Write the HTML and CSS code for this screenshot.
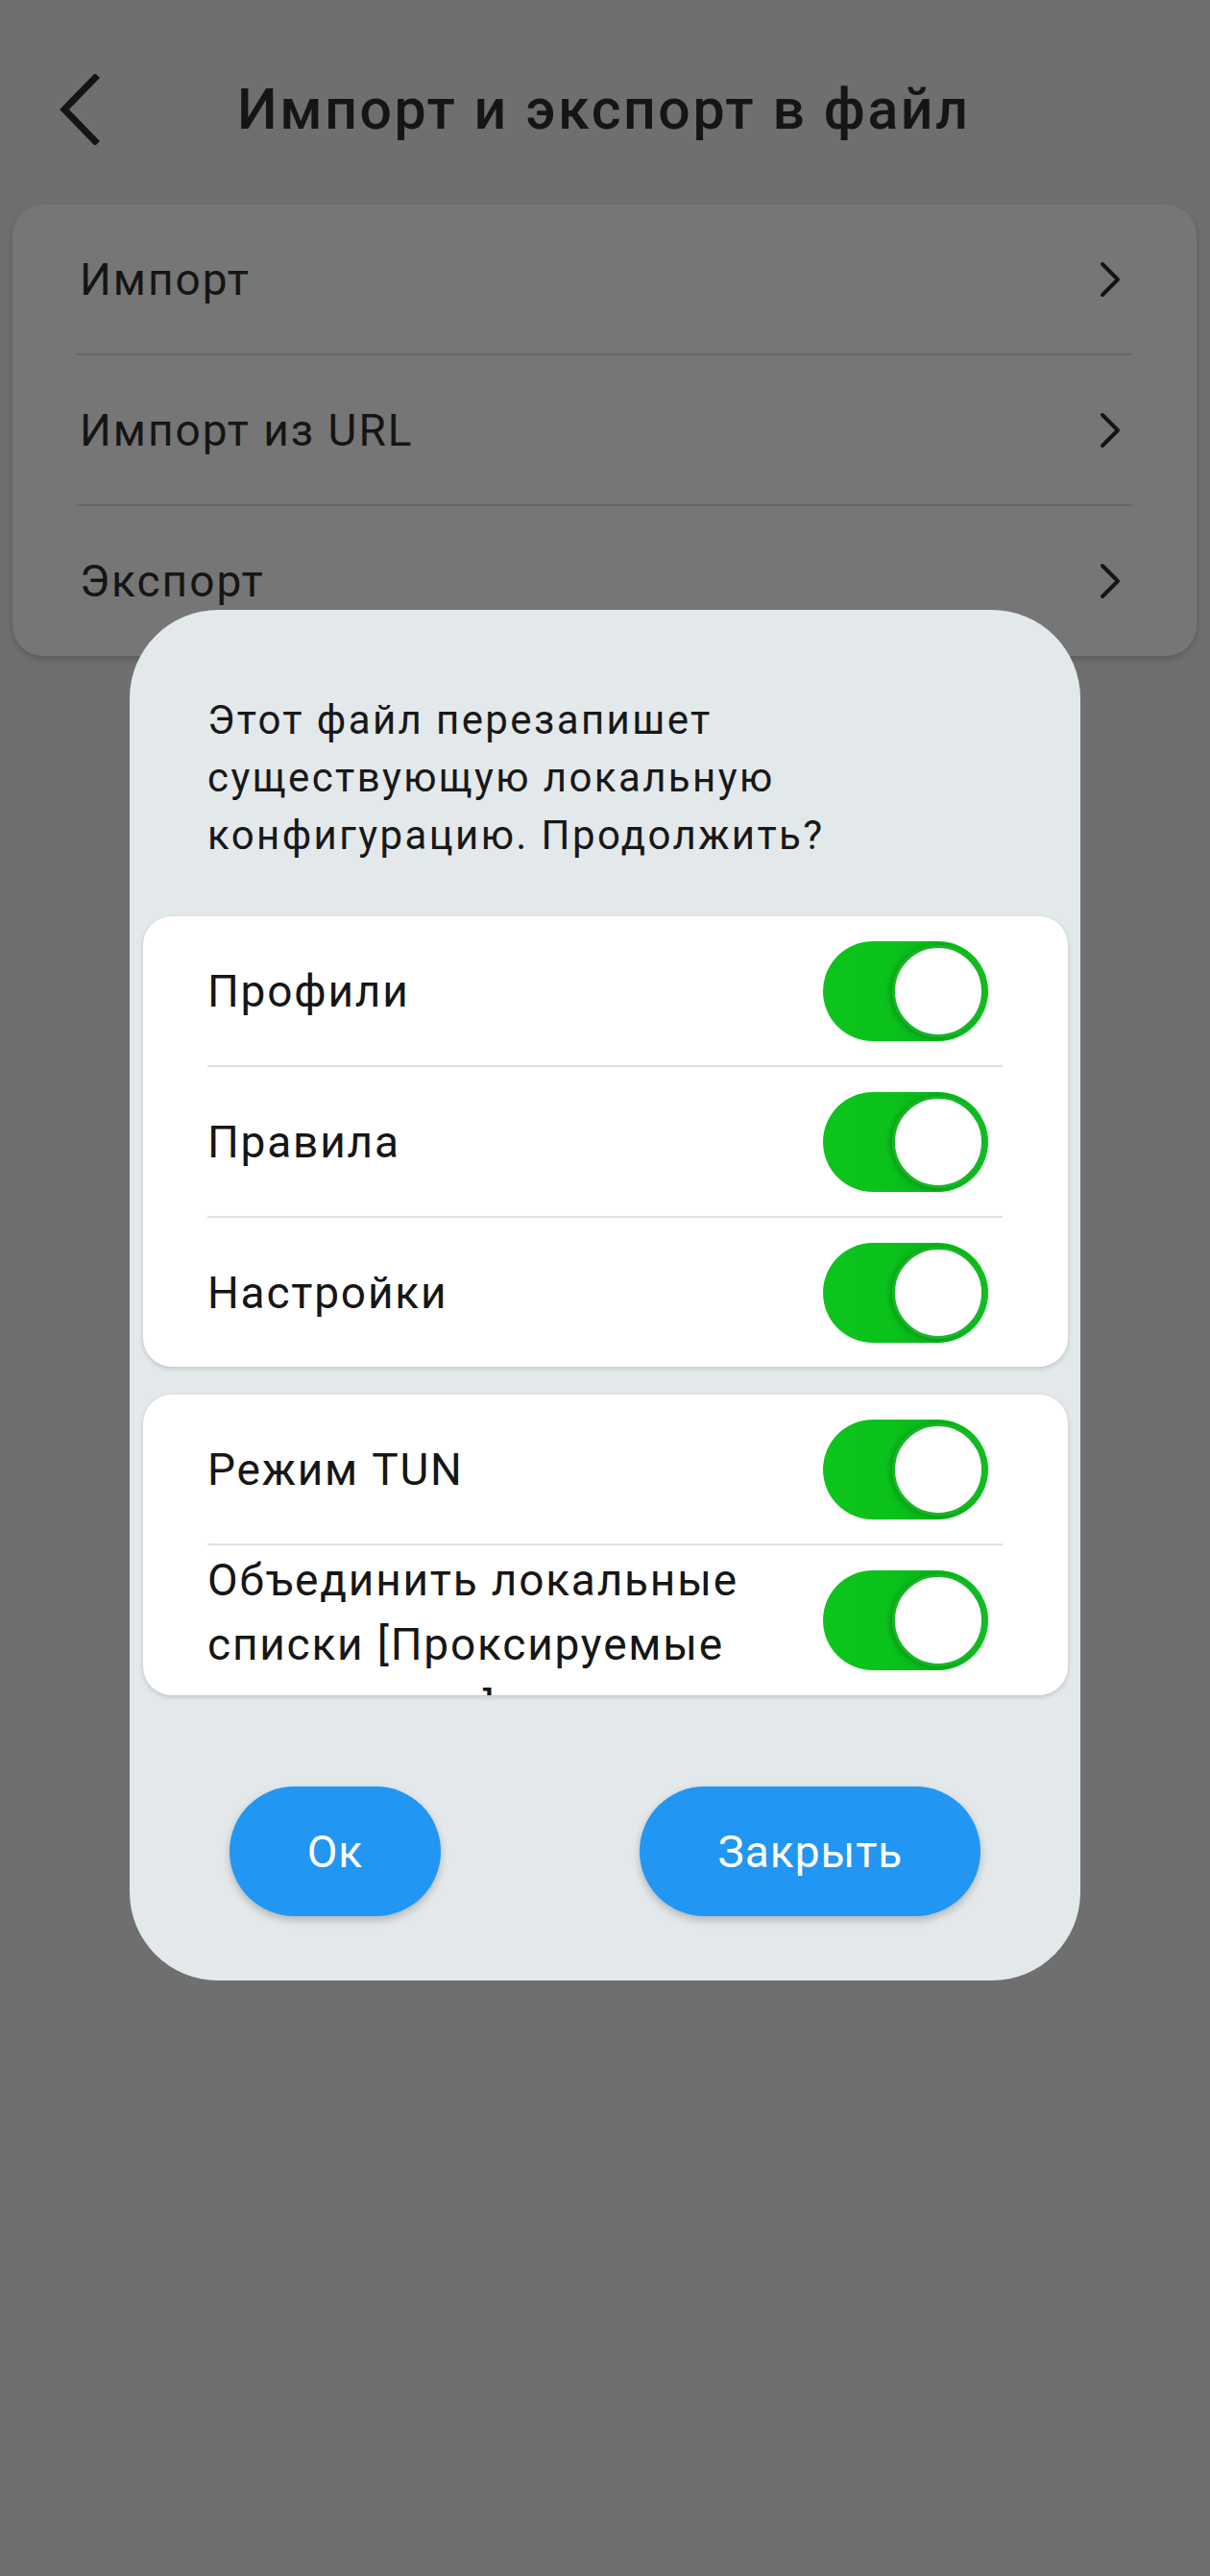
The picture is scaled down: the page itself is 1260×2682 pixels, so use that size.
FILE: index.html
```html
<!DOCTYPE html>
<html lang="ru">
<head>
<meta charset="utf-8">
<title>Импорт и экспорт в файл</title>
<link rel="stylesheet" href="styles.css">
</head>
<body>
<div class="page">
  <header class="header">
    <svg class="back" width="44" height="74" viewBox="0 0 44 74"><path d="M38 4 L6 37 L38 70" fill="none" stroke="#141414" stroke-width="7" stroke-linecap="square"/></svg>
    <h1 class="title">Импорт и экспорт в файл</h1>
  </header>
  <section class="card">
    <div class="row"><span class="row-text">Импорт</span><svg class="chev" width="24" height="38" viewBox="0 0 24 38"><path d="M4 3 L20 19 L4 35" fill="none" stroke="#141414" stroke-width="4" stroke-linecap="round" stroke-linejoin="round"/></svg></div>
    <div class="row"><span class="row-text">Импорт из URL</span><svg class="chev" width="24" height="38" viewBox="0 0 24 38"><path d="M4 3 L20 19 L4 35" fill="none" stroke="#141414" stroke-width="4" stroke-linecap="round" stroke-linejoin="round"/></svg></div>
    <div class="row"><span class="row-text">Экспорт</span><svg class="chev" width="24" height="38" viewBox="0 0 24 38"><path d="M4 3 L20 19 L4 35" fill="none" stroke="#141414" stroke-width="4" stroke-linecap="round" stroke-linejoin="round"/></svg></div>
  </section>

  <div class="dialog">
    <p class="message">Этот файл перезапишет существующую локальную конфигурацию. Продолжить?</p>
    <div class="group">
      <div class="opt"><span class="opt-text">Профили</span><span class="toggle"><span class="thumb"></span></span></div>
      <div class="opt"><span class="opt-text">Правила</span><span class="toggle"><span class="thumb"></span></span></div>
      <div class="opt"><span class="opt-text">Настройки</span><span class="toggle"><span class="thumb"></span></span></div>
    </div>
    <div class="group group-clip">
      <div class="opt"><span class="opt-text">Режим TUN</span><span class="toggle"><span class="thumb"></span></span></div>
      <div class="opt opt-multi"><span class="opt-text multi">Объединить локальные списки [Проксируемые приложения]</span><span class="toggle"><span class="thumb"></span></span></div>
    </div>
    <div class="actions">
      <button class="btn">Ок</button>
      <button class="btn">Закрыть</button>
    </div>
  </div>
</div>
</body>
</html>
```
FILE: styles.css
```css
* { box-sizing: border-box; }
html, body { margin: 0; padding: 0; }
body {
  width: 1260px;
  height: 2682px;
  background: #6f6f6f;
  font-family: Roboto, "Noto Sans", sans-serif;
  color: #151515;
  overflow: hidden;
}
.page { position: relative; width: 1260px; height: 2682px; }

.header {
  height: 213px;
  display: flex;
  align-items: center;
  padding-left: 61px;
  padding-top: 14px;
}
.back { flex: none; }
.title {
  margin: 0 0 0 142px;
  font-size: 59px;
  font-weight: 500;
  letter-spacing: 2.6px;
  color: #151515;
  line-height: 1;
}

.card {
  margin: 0 14px 0 13px;
  background: #767676;
  border-radius: 32px;
  padding: 0 67px;
  box-shadow: 0 3px 6px rgba(0,0,0,0.18);
}
.row {
  height: 157px;
  display: flex;
  align-items: center;
  justify-content: space-between;
  border-bottom: 2px solid #666;
}
.row:last-child { border-bottom: none; height: 156px; }
.row-text { font-size: 46px; padding-left: 3px; letter-spacing: 2px; }
.chev { margin-right: 11px; }

.dialog {
  position: absolute;
  left: 135px;
  top: 635px;
  width: 990px;
  height: 1427px;
  background: #e3e8eb;
  border-radius: 92px;
  padding: 85px 13px 0 14px;
}
.message {
  margin: 0 0 54px 0;
  padding: 0 120px 0 67px;
  font-size: 42px;
  line-height: 60px;
  letter-spacing: 2.4px;
  color: #181818;
}
.group {
  background: #fff;
  border-radius: 30px;
  padding: 0 68px 0 67px;
  box-shadow: 0 2px 5px rgba(0,0,0,0.16);
  margin-bottom: 29px;
}
.group-clip {
  height: 313px;
  overflow: hidden;
  margin-bottom: 95px;
}
.opt {
  height: 157px;
  display: flex;
  align-items: center;
  justify-content: space-between;
  border-bottom: 2px solid #dde1e4;
}
.opt:last-child { border-bottom: none; height: 155px; }
.opt-text { font-size: 46px; color: #161616; letter-spacing: 1.8px; }
.multi {
  align-self: flex-start;
  margin-top: 3px;
  line-height: 67px;
  width: 600px;
}

.toggle {
  flex: none;
  width: 172px;
  height: 104px;
  border-radius: 52px;
  background: linear-gradient(90deg, #0cc41c 0%, #0bc21b 40%, #07b518 70%, #0cc41c 100%);
  display: flex;
  align-items: center;
  justify-content: flex-end;
  padding-right: 4px;
  margin-right: 15px;
}
.thumb {
  width: 96px;
  height: 96px;
  border-radius: 50%;
  background: #fff;
  border: 3px solid #1bb52a;
  box-shadow: -3px 1px 5px rgba(0,60,0,0.25);
}

.actions {
  display: flex;
  justify-content: space-around;
  margin: 0 -13px 0 -14px;
}
.btn {
  height: 135px;
  padding: 0 81px;
  border: none;
  border-radius: 68px;
  background: #2196f3;
  color: #fff;
  font-family: Roboto, "Noto Sans", sans-serif;
  font-size: 46px;
  font-weight: 400;
  letter-spacing: 1px;
  box-shadow: 0 4px 8px rgba(0,0,0,0.22);
}
```
